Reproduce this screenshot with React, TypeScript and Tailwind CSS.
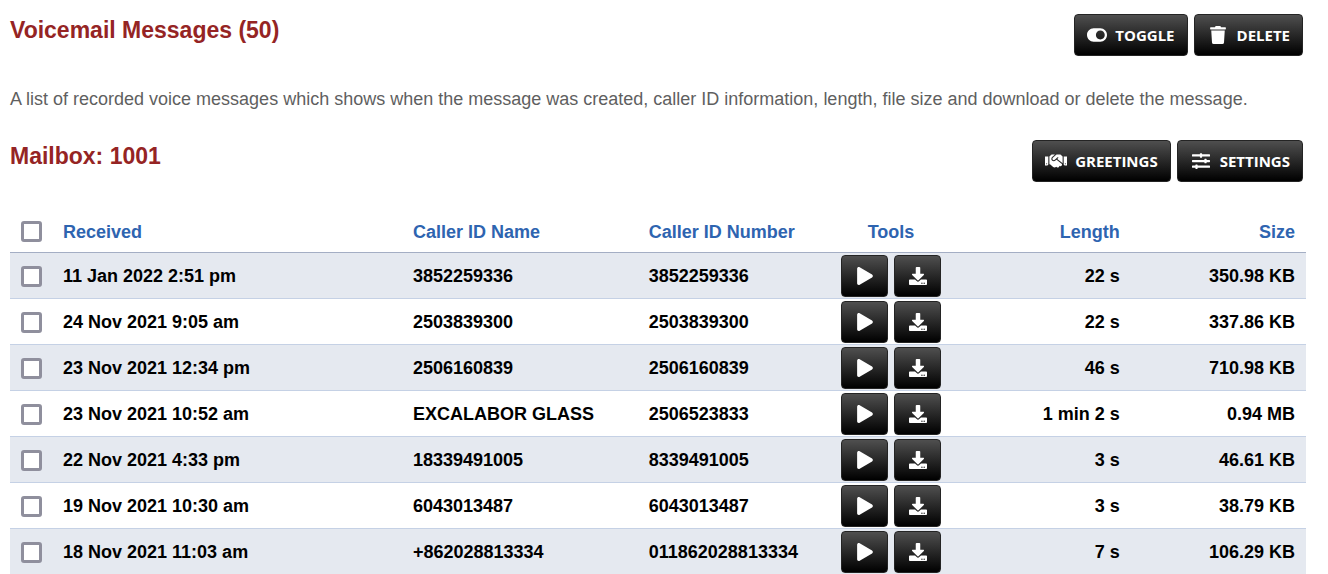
import { useState } from "react";
import type { ReactNode } from "react";
import { FaDownload, FaHandshake, FaPlay, FaSlidersH, FaToggleOn, FaTrash } from "react-icons/fa";

interface Message {
  received: string;
  name: string;
  number: string;
  length: string;
  size: string;
}

const messages: Message[] = [
  { received: "11 Jan 2022 2:51 pm", name: "3852259336", number: "3852259336", length: "22 s", size: "350.98 KB" },
  { received: "24 Nov 2021 9:05 am", name: "2503839300", number: "2503839300", length: "22 s", size: "337.86 KB" },
  { received: "23 Nov 2021 12:34 pm", name: "2506160839", number: "2506160839", length: "46 s", size: "710.98 KB" },
  { received: "23 Nov 2021 10:52 am", name: "EXCALABOR GLASS", number: "2506523833", length: "1 min 2 s", size: "0.94 MB" },
  { received: "22 Nov 2021 4:33 pm", name: "18339491005", number: "8339491005", length: "3 s", size: "46.61 KB" },
  { received: "19 Nov 2021 10:30 am", name: "6043013487", number: "6043013487", length: "3 s", size: "38.79 KB" },
  { received: "18 Nov 2021 11:03 am", name: "+862028813334", number: "011862028813334", length: "7 s", size: "106.29 KB" },
];

const buttonStyle =
  "inline-flex h-[42px] items-center rounded-[4px] border border-[#242424] bg-linear-to-b/srgb from-[#4f4f4f] to-black text-white hover:from-black";

const checkboxStyle =
  "block size-[21px] appearance-none rounded-[3px] border-3 border-[#8f8f9d] bg-white checked:bg-[#2e64b0]";

function ActionButton({ icon, label, onClick }: { icon: ReactNode; label: string; onClick?: () => void }) {
  return (
    <button
      type="button"
      onClick={onClick}
      className={`${buttonStyle} gap-2 px-3 font-['Open_Sans',sans-serif] text-[15px] font-bold`}
    >
      {icon}
      <span>{label}</span>
    </button>
  );
}

export default function App() {
  const [selected, setSelected] = useState<number[]>([]);
  const allSelected = selected.length === messages.length;

  const toggleOne = (index: number) =>
    setSelected((prev) => (prev.includes(index) ? prev.filter((i) => i !== index) : [...prev, index]));

  const toggleAll = () => setSelected(allSelected ? [] : messages.map((_, i) => i));

  // inverts the current selection
  const invert = () => setSelected(messages.map((_, i) => i).filter((i) => !selected.includes(i)));

  return (
    <main className="bg-white pt-[14px] pr-[22px] pl-[10px] font-['Liberation_Sans',Arial,sans-serif] text-[18px] leading-6">
      <header className="flex items-start justify-between pr-[3px]">
        <h1 className="text-[23px] leading-8 font-bold text-[#952424]">Voicemail Messages (50)</h1>
        <div className="flex gap-[6px]">
          <ActionButton icon={<FaToggleOn className="size-5" />} label="TOGGLE" onClick={invert} />
          <ActionButton icon={<FaTrash className="h-[18px] w-[22px]" />} label="DELETE" />
        </div>
      </header>

      <p className="mt-[31px] text-[#5f5f5f]">
        A list of recorded voice messages which shows when the message was created, caller ID information, length, file
        size and download or delete the message.
      </p>

      <section className="mt-[29px]">
        <div className="flex items-start justify-between pr-[3px]">
          <h2 className="text-[23px] leading-8 font-bold text-[#952424]">Mailbox: 1001</h2>
          <div className="flex gap-[6px]">
            <ActionButton icon={<FaHandshake className="size-[22px]" />} label="GREETINGS" />
            <ActionButton icon={<FaSlidersH className="h-[18px] w-[22px]" />} label="SETTINGS" />
          </div>
        </div>

        <table className="mt-[29px] w-full table-fixed border-separate border-spacing-0 text-left font-bold">
          <thead>
            <tr className="h-[42px] text-[#2e64b0] *:border-b *:border-[#a4aec4]">
              <th className="w-[43px] pl-[11px]">
                <input
                  type="checkbox"
                  aria-label="Select all messages"
                  checked={allSelected}
                  onChange={toggleAll}
                  className={checkboxStyle}
                />
              </th>
              <th className="w-[27%] px-[10px]">Received</th>
              <th className="w-[18.2%] px-[10px]">Caller ID Name</th>
              <th className="w-[15.3%] px-[10px]">Caller ID Number</th>
              <th className="w-[108px] text-center">Tools</th>
              <th className="px-[10px] text-right">Length</th>
              <th className="w-[13.6%] px-[11px] text-right">Size</th>
            </tr>
          </thead>
          <tbody>
            {messages.map((message, index) => (
              <tr key={message.received} className="h-[46px] text-black odd:bg-[#e5e9f0] *:border-b *:border-[#c5d1e5]">
                <td className="pt-px pl-[11px]">
                  <input
                    type="checkbox"
                    aria-label={`Select message from ${message.received}`}
                    checked={selected.includes(index)}
                    onChange={() => toggleOne(index)}
                    className={checkboxStyle}
                  />
                </td>
                <td className="px-[10px]">{message.received}</td>
                <td className="px-[10px]">{message.name}</td>
                <td className="px-[10px]">{message.number}</td>
                <td>
                  <div className="flex justify-center gap-[6px]">
                    <button type="button" aria-label="Play" className={`${buttonStyle} w-[47px] justify-center`}>
                      <FaPlay className="size-[18px]" />
                    </button>
                    <button type="button" aria-label="Download" className={`${buttonStyle} w-[47px] justify-center`}>
                      <FaDownload className="size-[18px]" />
                    </button>
                  </div>
                </td>
                <td className="px-[10px] text-right">{message.length}</td>
                <td className="px-[11px] text-right">{message.size}</td>
              </tr>
            ))}
          </tbody>
        </table>
      </section>
    </main>
  );
}
